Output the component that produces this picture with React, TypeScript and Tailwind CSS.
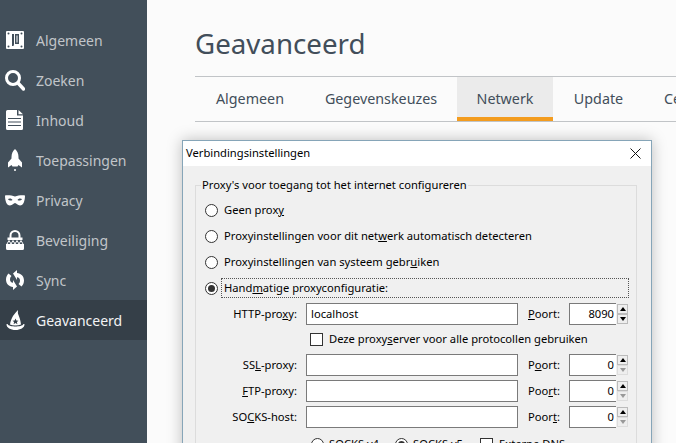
import React from "react";

const ui = "font-['Noto_Sans','Open_Sans',sans-serif]";

function AlgemeenIcon() {
  return (
    <svg width="18" height="18" viewBox="0 0 18 18">
      <path fillRule="evenodd" fill="#fff" d="M1 0h16a1 1 0 0 1 1 1v16a1 1 0 0 1-1 1H1a1 1 0 0 1-1-1V1a1 1 0 0 1 1-1zM6 3v12h1.5L8 13.5V3zm3 0v10h4V3zm1.5 1.5h1v7h-1z" />
      <g fill="#424f5a">
        <circle cx="2.5" cy="2.5" r="1" />
        <circle cx="15.5" cy="2.5" r="1" />
        <circle cx="2.5" cy="15.5" r="1" />
        <circle cx="15.5" cy="15.5" r="1" />
      </g>
    </svg>
  );
}

function SearchIcon() {
  return (
    <svg width="20" height="21" viewBox="0 0 20 21" fill="none" stroke="#fff">
      <circle cx="8" cy="8" r="6.500" strokeWidth="3" />
      <path d="M13 13L18.500 19" strokeWidth="3.400" strokeLinecap="round" />
    </svg>
  );
}

function PageIcon() {
  return (
    <svg width="18" height="20" viewBox="0 0 18 20">
      <path fill="#fff" d="M1.500 0H11v5.500h6V18.500a1.500 1.500 0 0 1-1.500 1.500h-14A1.500 1.500 0 0 1 0 18.500v-17A1.500 1.500 0 0 1 1.500 0zM12.500 0L17 4.200h-4.500z" />
      <path stroke="#424f5a" strokeWidth="1.200" d="M2 8.500h13M2 12h13M2 15.500h13" />
    </svg>
  );
}

function RocketIcon() {
  return (
    <svg width="16" height="23" viewBox="0 0 16 23" fill="#fff">
      <path d="M8 0c2 1.500 3.500 4.500 3.500 8v1.500l3.500 4v5l-3.500-2.500-1 1.500h-5l-1-1.500L1 18.500v-5l3.500-4V8C4.500 4.500 6 1.500 8 0z" />
      <circle cx="8" cy="21" r="1" />
    </svg>
  );
}

function MaskIcon() {
  return (
    <svg width="20" height="11" viewBox="0 0 20 11">
      <path fillRule="evenodd" fill="#fff" d="M0 .5C3 0 7 .5 10 1.500 13 .5 17 0 20 .5c0 5-1.500 10-5 10-2.500 0-3.500-2.500-5-2.500s-2.500 2.500-5 2.500c-3.500 0-5-5-5-10zM3 4c.5 1.500 3 2 4.500 1C7 3.500 4.500 3 3 4zm14 0c-1.500-1-4-.5-4.500 1 1.500 1 4 .5 4.500-1z" />
    </svg>
  );
}

function LockIcon() {
  return (
    <svg width="18" height="20" viewBox="0 0 18 20">
      <path fill="none" stroke="#fff" strokeWidth="2" d="M4.500 8V5.500a4.500 4.500 0 0 1 9 0V8" />
      <path fill="#fff" d="M1.500 7.500h15V10H1.500zM0 14h18v4.500a1.500 1.500 0 0 1-1.500 1.500h-15A1.500 1.500 0 0 1 0 18.500z" />
      <path stroke="#fff" strokeWidth="1" d="M1 14l2-3.500 2 3.500 2-3.500 2 3.500 2-3.500 2 3.500 2-3.500 2 3.500" fill="none" />
    </svg>
  );
}

function SyncIcon() {
  return (
    <svg width="20" height="20" viewBox="0 0 20 20" fill="#fff">
      <path d="M8 3.500L12 0v3C16 3.500 19 6 19 10.500c0 2.500-1 4.500-2.500 6L13.500 14c1-1 1.500-2 1.500-3.500 0-2-1.200-3-3-3.300V10z" />
      <path d="M12 16.500L8 20v-3C4 16.500 1 14 1 9.500c0-2.500 1-4.500 2.500-6L6.500 6C5.500 7 5 8 5 9.500c0 2 1.200 3 3 3.300V10z" />
    </svg>
  );
}

function HatIcon() {
  return (
    <svg width="21" height="20" viewBox="0 0 21 20">
      <path fill="#fff" d="M8 6C9.500 4 11 2 13 0c0 2-.5 3 .5 5 1 2.500 2 5 2.500 9.500-3.500 1.200-8 1.200-11 0C5.500 11 6.500 8.500 8 6z" />
      <path fill="#fff" d="M1.500 14.500c0-.5.500-.5 1-.5.500 1.800 5 2.500 8 2.500s7.500-.7 8-2.500c.5 0 1 0 1 .5 0 3-4 5.500-9 5.500s-9-2.500-9-5.500z" />
      <path fill="#353f48" d="M10.500 8.500l.9 2 2.100.2-1.600 1.400.5 2.100-1.900-1.100-1.900 1.100.5-2.100-1.600-1.400 2.100-.2z" />
    </svg>
  );
}

const nav: { label: string; icon: React.ReactNode; active?: boolean }[] = [
  { label: "Algemeen", icon: <AlgemeenIcon /> },
  { label: "Zoeken", icon: <SearchIcon /> },
  { label: "Inhoud", icon: <PageIcon /> },
  { label: "Toepassingen", icon: <RocketIcon /> },
  { label: "Privacy", icon: <MaskIcon /> },
  { label: "Beveiliging", icon: <LockIcon /> },
  { label: "Sync", icon: <SyncIcon /> },
  { label: "Geavanceerd", icon: <HatIcon />, active: true },
];

function Radio({ checked }: { checked?: boolean }) {
  return (
    <span className="flex h-[13px] w-[13px] shrink-0 items-center justify-center rounded-full border border-[#333] bg-white">
      {checked && <span className="h-[7px] w-[7px] rounded-full bg-[#333]" />}
    </span>
  );
}

function Spinner({ disabled }: { disabled?: boolean }) {
  return (
    <span className="ml-px flex h-[20px] w-[11px] flex-col justify-between">
      <span className="flex h-[10px] items-center justify-center border border-[#bbb] bg-[#eee]">
        <span className="h-0 w-0 border-x-[3px] border-b-[4px] border-x-transparent border-b-black" />
      </span>
      <span className={"flex h-[10px] items-center justify-center border bg-[#eee] " + (disabled ? "border-[#ddd]" : "border-[#bbb]")}>
        <span className={"h-0 w-0 border-x-[3px] border-t-[4px] border-x-transparent " + (disabled ? "border-t-[#999]" : "border-t-black")} />
      </span>
    </span>
  );
}

function ProxyRow({ label, value, port, disabled, className }: { label: React.ReactNode; value?: string; port: React.ReactNode; disabled?: boolean; className?: string }) {
  return (
    <div className={"flex h-[22px] items-center " + (className ?? "")}>
      <span className="w-[93px] text-right">{label}</span>
      <span className="ml-[9px] flex h-[22px] w-[212px] items-center border border-[#7a7a7a] bg-white px-[4px]">{value}</span>
      <span className="ml-[10px] w-[41px]">{port}</span>
      <span className="flex h-[22px] w-[47px] items-center justify-end border border-[#7a7a7a] border-r-0 bg-white pr-[2px]">{disabled ? "0" : "8090"}</span>
      <Spinner disabled={disabled} />
    </div>
  );
}

export default function App() {
  return (
    <div className={"relative flex h-[443px] w-[676px] overflow-hidden bg-[#fbfbfb] " + ui}>
      <aside className="w-[147px] shrink-0 bg-[#424f5a] pt-[20px]">
        {nav.map((n) => (
          <div
            key={n.label}
            className={"flex h-[40px] items-center " + (n.active ? "bg-[#353f48] text-[#f2f3f4]" : "text-[#c1c5c9]")}
          >
            <span className="flex w-[36px] shrink-0 justify-center pl-[1px] pr-[7px]">{n.icon}</span>
            <span className="pt-px text-[14px]">{n.label}</span>
          </div>
        ))}
      </aside>

      <main className="min-w-0 flex-1 pl-[48px] text-[#424e5a]">
        <h1 className="pt-[22px] text-[27.7px] leading-[43px]">Geavanceerd</h1>
        <div className="mt-[11px] flex h-[46px] border-y border-[#c1c4c7] text-[14.3px]">
          <span className="flex w-[110px] shrink-0 items-center justify-center">Algemeen</span>
          <span className="flex w-[152px] shrink-0 items-center justify-center">Gegevenskeuzes</span>
          <span className="flex w-[96px] shrink-0 items-center justify-center border-b-[4px] border-[#f39c1f] bg-[#ebebeb] pt-[4px]">Netwerk</span>
          <span className="flex w-[91px] shrink-0 items-center justify-center">Update</span>
          <span className="flex shrink-0 items-center pl-[20px]">Certificaten</span>
        </div>
      </main>

      {/* dialog over the page */}
      <div className="absolute left-[182px] top-[140px] h-[320px] w-[470px] border border-[#86a5b8] bg-[#f0f0f0] text-[11.2px] text-black shadow-[0_0_14px_rgba(0,0,0,0.25)]">
        <div className="flex h-[25px] items-center justify-between bg-white pl-[3px] pr-[10px]">
          <span>Verbindingsinstellingen</span>
          <svg width="11" height="11" viewBox="0 0 11 11" stroke="#111" strokeWidth="1">
            <path d="M.5.5l10 10M10.500.5l-10 10" />
          </svg>
        </div>
        <div className="relative ml-[12px] mr-[14px] mt-[19px] h-[280px] border border-[#dcdcdc] px-[8px] pt-[11px]">
          <span className="absolute -top-[9px] left-[5px] bg-[#f0f0f0] px-[1px]">Proxy's voor toegang tot het internet configureren</span>
          <div className="flex h-[26px] items-center gap-[6px] pl-[1px]">
            <Radio />
            <span>Geen prox<u>y</u></span>
          </div>
          <div className="flex h-[26px] items-center gap-[6px] pl-[1px]">
            <Radio />
            <span>Proxyinstellingen voor dit net<u>w</u>erk automatisch detecteren</span>
          </div>
          <div className="flex h-[26px] items-center gap-[6px] pl-[1px]">
            <Radio />
            <span>Proxyinstellingen van systeem gebr<u>u</u>iken</span>
          </div>
          <div className="flex h-[26px] items-center gap-[6px] pl-[1px]">
            <Radio checked />
            <span className="-ml-[3px] -mr-px flex h-[20px] flex-1 items-center border border-dotted border-[#555] pl-[2px]">
              Hand<u>m</u>atige proxyconfiguratie:
            </span>
          </div>
          <ProxyRow className="mt-[2px]" label={<>HTTP-pro<u>x</u>y:</>} value="localhost" port={<><u>P</u>oort:</>} />
          <div className="flex h-[29px] items-center gap-[6px] pl-[106px]">
            <span className="h-[13px] w-[13px] shrink-0 border border-[#333] bg-white" />
            <span>Deze proxy<u>s</u>erver voor alle protocollen gebruiken</span>
          </div>
          <ProxyRow label={<>SS<u>L</u>-proxy:</>} port={<>P<u>o</u>ort:</>} disabled />
          <ProxyRow className="mt-[4px]" label={<><u>F</u>TP-proxy:</>} port={<>Poo<u>r</u>t:</>} disabled />
          <ProxyRow className="mt-[4px]" label={<>SO<u>C</u>KS-host:</>} port={<>Poor<u>t</u>:</>} disabled />
          <div className="mt-[7px] flex h-[18px] items-center pl-[107px]">
            <Radio />
            <span className="ml-[5px] w-[66px]">SOCKS v4</span>
            <Radio checked />
            <span className="ml-[5px] w-[67px]">SOCKS v5</span>
            <span className="h-[13px] w-[13px] border border-[#333] bg-white" />
            <span className="ml-[6px]">Externe DNS</span>
          </div>
        </div>
      </div>
    </div>
  );
}
